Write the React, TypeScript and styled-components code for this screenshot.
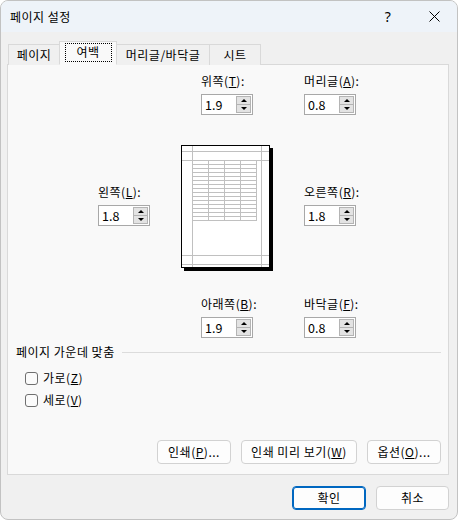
import React from 'react'
import styled, { createGlobalStyle } from 'styled-components'

const GlobalStyle = createGlobalStyle`
  html, body {
    margin: 0;
    padding: 0;
    background: #ffffff;
  }
  body {
    font-family: "Noto Sans CJK KR", "Noto Sans", sans-serif;
    font-size: 12px;
    letter-spacing: 0.5px;
    color: #000;
  }
  * {
    box-sizing: border-box;
  }
`

// dialog frame
const Window = styled.div`
  width: 458px;
  height: 520px;
  border: 1px solid #c2c2c2;
  border-radius: 8px;
  overflow: hidden;
  display: flex;
  flex-direction: column;
  background: #f0f0f0;
`

const TitleBar = styled.div`
  height: 31px;
  display: flex;
  align-items: center;
  padding-left: 9px;
  background: #eef3f9;
`

const Title = styled.div`
  flex: 1;
  line-height: 16px;
`

const TitleButton = styled.div`
  width: 46px;
  height: 31px;
  display: flex;
  align-items: center;
  justify-content: center;
  font-family: "Segoe UI", "Noto Sans", sans-serif;
  font-size: 14px;
`

const Body = styled.div`
  flex: 1;
  display: flex;
  flex-direction: column;
  padding: 9px 8px 9px 6px;
`

const TabRow = styled.div`
  display: flex;
  align-items: flex-end;
  height: 24px;
  margin-left: 1px;
  position: relative;
  z-index: 1;
  margin-bottom: -1px;
`

const Tab = styled.div<{ $w: number; $active?: boolean }>`
  width: ${(p) => p.$w}px;
  height: ${(p) => (p.$active ? 24 : 21)}px;
  display: flex;
  align-items: center;
  justify-content: center;
  background: ${(p) => (p.$active ? '#f9f9f9' : '#f0f0f0')};
  border: 1px solid #d9d9d9;
  border-bottom: ${(p) => (p.$active ? '1px solid #f9f9f9' : 'none')};
  margin-right: -1px;
  position: relative;
  z-index: ${(p) => (p.$active ? 2 : 1)};
  line-height: 16px;
  padding-bottom: ${(p) => (p.$active ? 2 : 0)}px;
`

const FocusRect = styled.span`
  width: 47px;
  height: 19px;
  border: 1px dotted #000;
  display: flex;
  align-items: center;
  justify-content: center;
`

const Panel = styled.div`
  height: 411px;
  background: #f9f9f9;
  border: 1px solid #d9d9d9;
  display: flex;
  flex-direction: column;
  padding: 8px 7px 10px 0;
`

const MarginGrid = styled.div`
  display: grid;
  grid-template-columns: 52px 104px 100px;
  column-gap: 25px;
  grid-template-rows: auto 126px auto;
  row-gap: 30px;
  padding-left: 90px;
`

const Field = styled.div<{ $center?: boolean; $top?: number }>`
  display: flex;
  flex-direction: column;
  align-items: ${(p) => (p.$center ? 'center' : 'flex-start')};
  align-self: start;
  margin-top: ${(p) => p.$top || 0}px;
`

const FieldInner = styled.div`
  display: flex;
  flex-direction: column;
  gap: 5px;
  width: 52px;
`

const Label = styled.div`
  line-height: 16px;
  white-space: nowrap;
`

const Spin = styled.div`
  width: 52px;
  height: 21px;
  border: 1px solid #a8a8a8;
  background: #fff;
  display: flex;
`

const SpinValue = styled.div`
  flex: 1;
  padding-left: 3px;
  line-height: 19px;
  font-size: 12.5px;
  letter-spacing: 0;
`

const SpinCol = styled.div`
  width: 15px;
  margin: 1px;
  display: flex;
  flex-direction: column;
`

const SpinBtn = styled.div<{ $down?: boolean }>`
  flex: 1;
  background: #e3e3e3;
  border: 1px solid #b4b4b4;
  margin-top: ${(p) => (p.$down ? -1 : 0)}px;
  display: flex;
  align-items: center;
  justify-content: center;

  &::after {
    content: '';
    border-left: 3px solid transparent;
    border-right: 3px solid transparent;
    ${(p) => (p.$down ? 'border-top: 3px solid #000;' : 'border-bottom: 3px solid #000;')}
  }
`

const PreviewCell = styled.div`
  display: flex;
  justify-content: center;
`

const SectionHead = styled.div`
  display: flex;
  align-items: center;
  gap: 7px;
  margin: 6px 0 7px 8px;
  line-height: 16px;

  &::after {
    content: '';
    flex: 1;
    height: 1px;
    background: #dcdcdc;
  }
`

const CheckRow = styled.label`
  display: flex;
  align-items: center;
  gap: 5px;
  height: 22px;
  padding-left: 17px;
  line-height: 16px;
`

const CheckBox = styled.span`
  width: 13px;
  height: 13px;
  border: 1px solid #6f6f6f;
  border-radius: 3px;
  background: #fbfbfb;
`

const ButtonRow = styled.div<{ $gap: number }>`
  display: flex;
  justify-content: flex-end;
  gap: ${(p) => p.$gap}px;
  margin-top: auto;
`

const Button = styled.div<{ $w: number; $primary?: boolean }>`
  width: ${(p) => p.$w}px;
  height: 24px;
  display: flex;
  align-items: center;
  justify-content: center;
  background: #fdfdfd;
  border: 1px solid ${(p) => (p.$primary ? '#0067c0' : '#d2d2d2')};
  box-shadow: ${(p) => (p.$primary ? 'inset 0 0 0 1px #0067c0' : 'none')};
  border-radius: 4px;
  line-height: 16px;
  white-space: nowrap;
`

const Footer = styled(ButtonRow)`
  margin-top: 11px;
`

const SpinBox = ({ value }: { value: string }) => (
  <Spin>
    <SpinValue>{value}</SpinValue>
    <SpinCol>
      <SpinBtn />
      <SpinBtn $down />
    </SpinCol>
  </Spin>
)

const MarginField = ({ name, k, value }: { name: string; k: string; value: string }) => (
  <FieldInner>
    <Label>
      {name}(<u>{k}</u>):
    </Label>
    <SpinBox value={value} />
  </FieldInner>
)

const PagePreview = () => {
  const rows = []
  for (let i = 0; i <= 15; i++) rows.push(15 + i * 4)
  const cols = [11, 27, 43, 59, 75]
  return (
    <svg width="92" height="126" viewBox="0 0 92 126">
      <rect x="3" y="3" width="89" height="123" fill="#000" />
      <rect x="0.5" y="0.5" width="88" height="122" fill="#fff" stroke="#000" />
      <g stroke="#c0c0c0" strokeWidth="1" shapeRendering="crispEdges">
        <line x1="11.5" y1="1" x2="11.5" y2="122" />
        <line x1="80.5" y1="1" x2="80.5" y2="122" />
        <line x1="1" y1="6.5" x2="88" y2="6.5" />
        <line x1="1" y1="15.5" x2="88" y2="15.5" />
        <line x1="1" y1="110.5" x2="88" y2="110.5" />
        <line x1="1" y1="119.5" x2="88" y2="119.5" />
        {rows.map((y) => (
          <line key={y} x1="11" y1={y + 0.5} x2="76" y2={y + 0.5} />
        ))}
        {cols.map((x) => (
          <line key={x} x1={x + 0.5} y1="15" x2={x + 0.5} y2="76" />
        ))}
      </g>
    </svg>
  )
}

export default function App() {
  return (
    <>
      <GlobalStyle />
      <Window>
        <TitleBar>
          <Title>페이지 설정</Title>
          <TitleButton>?</TitleButton>
          <TitleButton>
            <svg width="11" height="11" viewBox="0 0 11 11">
              <path d="M0.5 0.5 L10.5 10.5 M10.5 0.5 L0.5 10.5" stroke="#000" strokeWidth="1" />
            </svg>
          </TitleButton>
        </TitleBar>
        <Body>
          <TabRow>
            <Tab $w={52}>페이지</Tab>
            <Tab $w={58} $active>
              <FocusRect>여백</FocusRect>
            </Tab>
            <Tab $w={94}>머리글/바닥글</Tab>
            <Tab $w={52}>시트</Tab>
          </TabRow>
          <Panel>
            <MarginGrid>
              <div />
              <Field $center>
                <MarginField name="위쪽" k="T" value="1.9" />
              </Field>
              <Field>
                <MarginField name="머리글" k="A" value="0.8" />
              </Field>

              <Field $top={39}>
                <MarginField name="왼쪽" k="L" value="1.8" />
              </Field>
              <PreviewCell>
                <PagePreview />
              </PreviewCell>
              <Field $top={39}>
                <MarginField name="오른쪽" k="R" value="1.8" />
              </Field>

              <div />
              <Field $center $top={-5}>
                <MarginField name="아래쪽" k="B" value="1.9" />
              </Field>
              <Field $top={-5}>
                <MarginField name="바닥글" k="F" value="0.8" />
              </Field>
            </MarginGrid>

            <SectionHead>페이지 가운데 맞춤</SectionHead>
            <CheckRow>
              <CheckBox />
              <span>
                가로(<u>Z</u>)
              </span>
            </CheckRow>
            <CheckRow>
              <CheckBox />
              <span>
                세로(<u>V</u>)
              </span>
            </CheckRow>

            <ButtonRow $gap={10}>
              <Button $w={74}>
                <span>
                  인쇄(<u>P</u>)...
                </span>
              </Button>
              <Button $w={116}>
                <span>
                  인쇄 미리 보기(<u>W</u>)
                </span>
              </Button>
              <Button $w={74}>
                <span>
                  옵션(<u>O</u>)...
                </span>
              </Button>
            </ButtonRow>
          </Panel>
          <Footer $gap={10}>
            <Button $w={74} $primary>
              확인
            </Button>
            <Button $w={73}>취소</Button>
          </Footer>
        </Body>
      </Window>
    </>
  )
}
